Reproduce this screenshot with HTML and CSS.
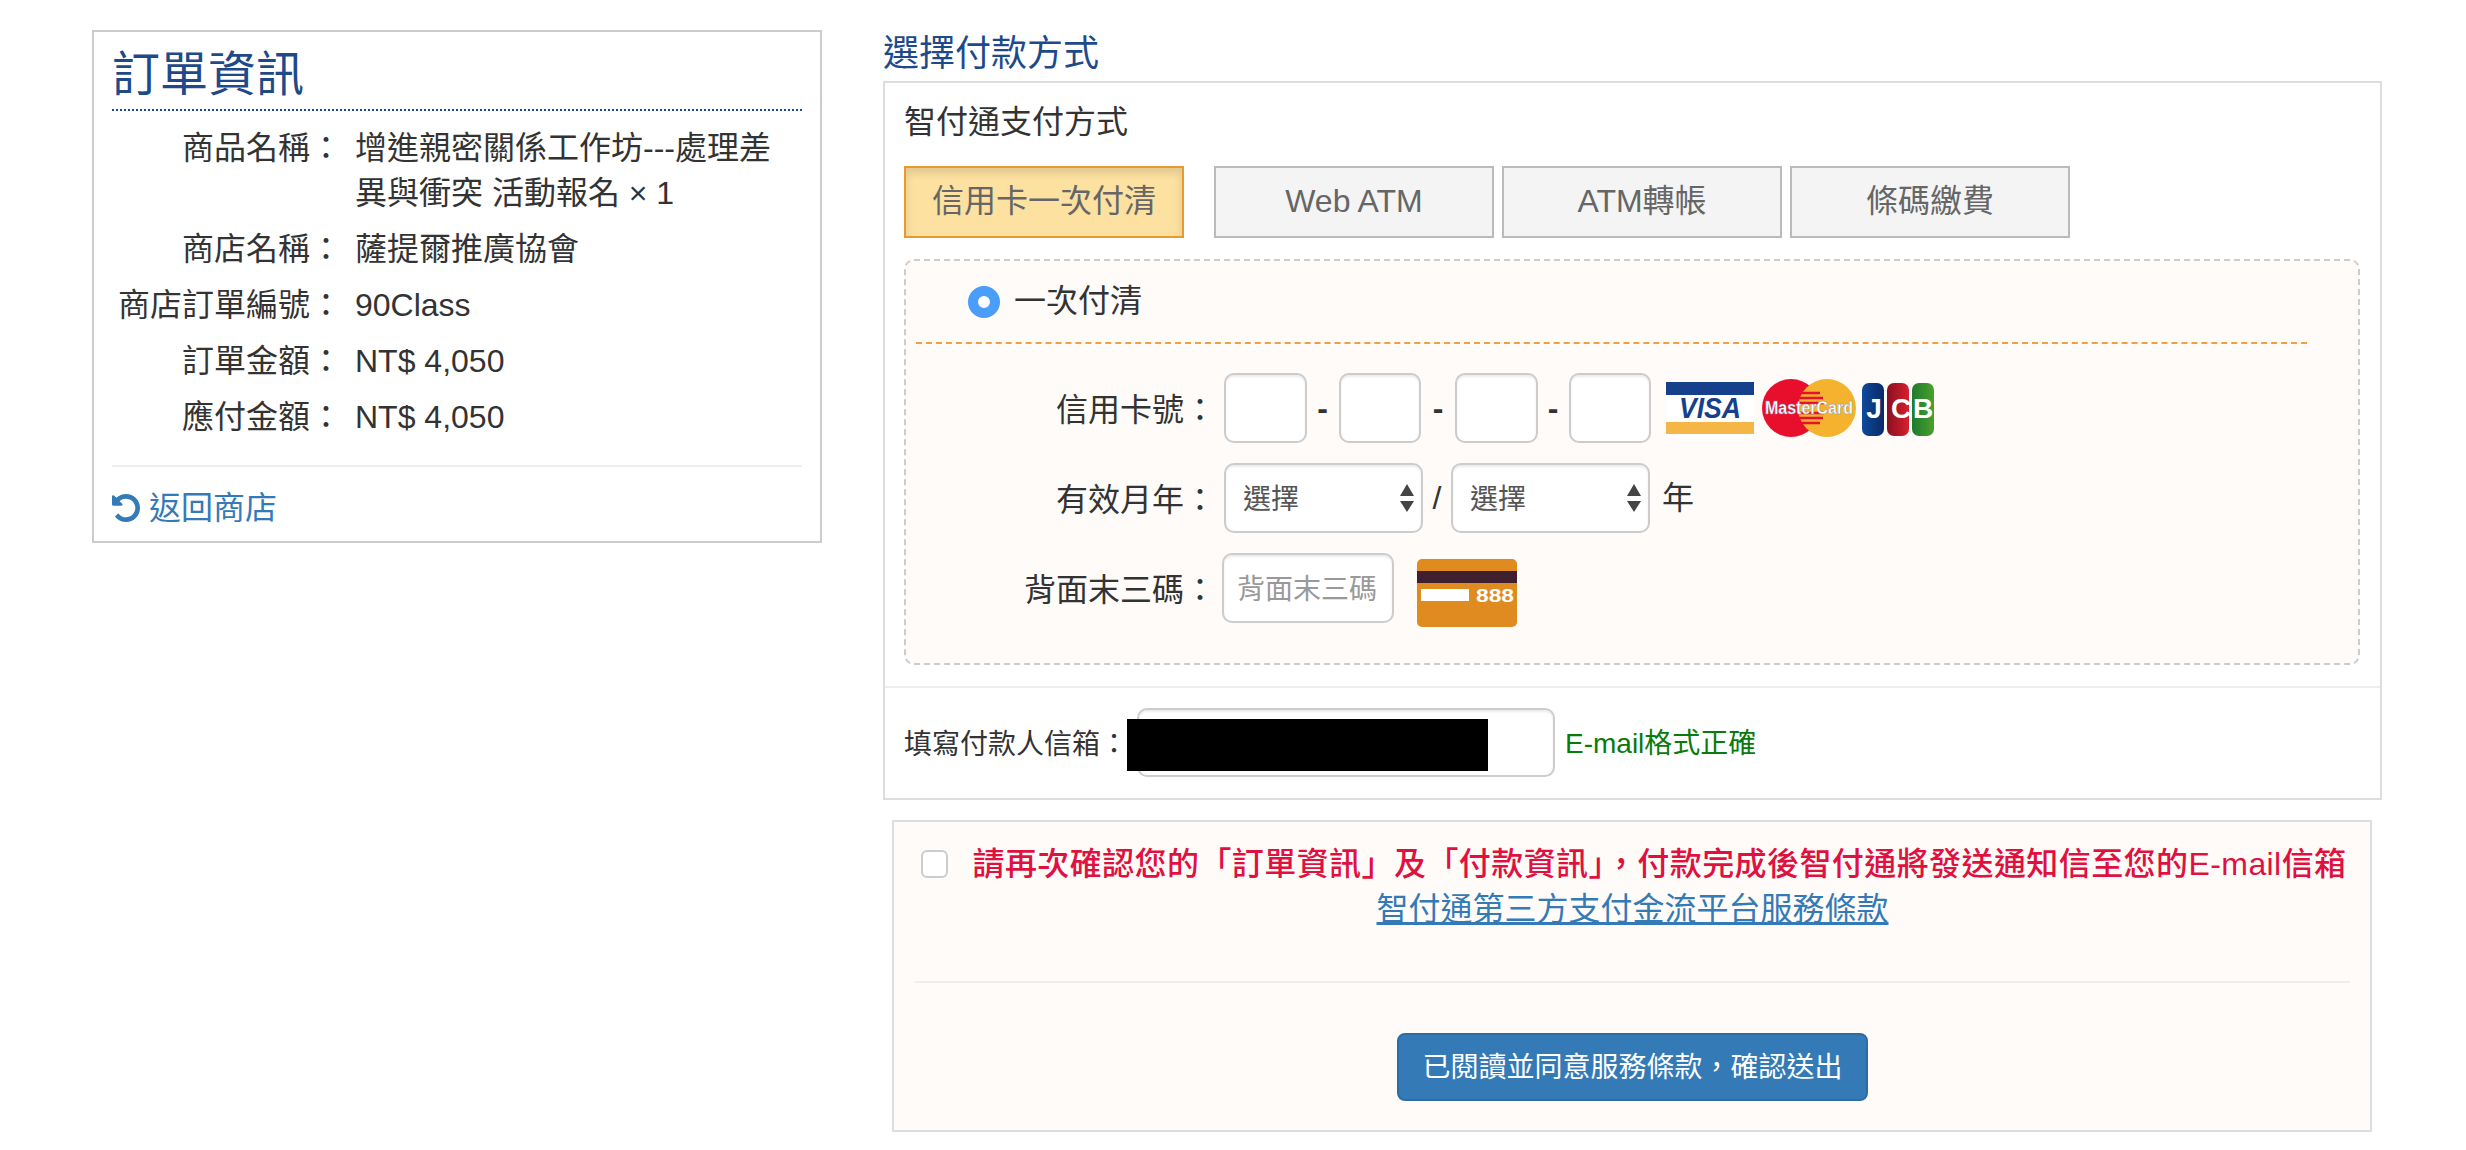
FILE: index.html
```html
<!DOCTYPE html>
<html lang="zh-TW">
<head>
<meta charset="utf-8">
<title>智付通支付</title>
<link rel="stylesheet" href="styles.css">
</head>
<body>
<main class="page">
  <aside class="order">
    <h2 class="order-title">訂單資訊</h2>
    <dl class="order-list">
      <dt>商品名稱：</dt><dd>增進親密關係工作坊---處理差異與衝突 活動報名 × 1</dd>
      <dt>商店名稱：</dt><dd>薩提爾推廣協會</dd>
      <dt>商店訂單編號：</dt><dd>90Class</dd>
      <dt>訂單金額：</dt><dd>NT$ 4,050</dd>
      <dt>應付金額：</dt><dd>NT$ 4,050</dd>
    </dl>
    <hr class="order-rule">
    <a class="back" href="#">
      <svg class="back-icon" viewBox="128 128 1536 1536" aria-hidden="true"><path fill="#337ab7" d="M1664 896q0 156-61 298t-164 245-245 164-298 61q-172 0-327-72.5t-264-204.5q-7-10-6.5-22.5t8.5-20.5l137-138q10-9 25-9 16 2 23 12 73 95 179 147t225 52q104 0 198.5-40.5t163.5-109.5 109.5-163.5 40.5-198.5-40.5-198.5-109.5-163.5-163.5-109.5-198.5-40.5q-98 0-188 35.5t-160 101.5l137 138q31 30 14 69-17 40-59 40h-448q-26 0-45-19t-19-45v-448q0-42 40-59 39-17 69 14l130 129q107-101 244.5-156.5t284.5-55.5q156 0 298 61t245 164 164 245 61 298z"/></svg>返回商店
    </a>
  </aside>

  <section class="checkout">
    <h2 class="checkout-title">選擇付款方式</h2>
    <div class="pay-box">
      <div class="pay-top">
        <h3 class="pay-title">智付通支付方式</h3>
        <div class="tabs">
          <button class="tab tab-active" type="button">信用卡一次付清</button>
          <button class="tab tab-web" type="button">Web ATM</button>
          <button class="tab tab-next" type="button">ATM轉帳</button>
          <button class="tab tab-next" type="button">條碼繳費</button>
        </div>
        <div class="card-panel">
          <label class="plan">
            <input class="radio" type="radio" name="plan" checked>
            <span>一次付清</span>
          </label>
          <div class="card-form">
            <div class="form-row">
              <span class="form-label">信用卡號：</span>
              <input class="field field-num" type="text" aria-label="1">
              <span class="dash">-</span>
              <input class="field field-num" type="text" aria-label="2">
              <span class="dash dash-wide">-</span>
              <input class="field field-num" type="text" aria-label="3">
              <span class="dash dash-last">-</span>
              <input class="field field-num" type="text" aria-label="4">
              <svg class="brands" width="268" height="58" viewBox="0 0 268 58" aria-hidden="true">
                <defs>
                  <linearGradient id="jb" x1="0" x2="1" y1="0" y2="0"><stop offset="0" stop-color="#0d4a9c"/><stop offset="1" stop-color="#0a2a66"/></linearGradient>
                  <linearGradient id="jr" x1="0" x2="1" y1="0" y2="0"><stop offset="0" stop-color="#8a1020"/><stop offset="1" stop-color="#d81f2e"/></linearGradient>
                  <linearGradient id="jg" x1="0" x2="1" y1="0" y2="0"><stop offset="0" stop-color="#1f7a2e"/><stop offset="1" stop-color="#4aa02c"/></linearGradient>
                </defs>
                <rect x="0" y="3" width="88" height="55" fill="#fff"/>
                <rect x="0" y="3" width="88" height="13" fill="#16408c"/>
                <rect x="0" y="43" width="88" height="12" fill="#f4b646"/>
                <text class="visa-text" x="44" y="39" text-anchor="middle" textLength="62" lengthAdjust="spacingAndGlyphs">VISA</text>
                <circle cx="125" cy="29" r="29" fill="#e80f2c"/>
                <circle cx="161" cy="29" r="29" fill="#f5b22f"/>
                <path d="M132 14h22M129 19h28M128 24h30M128 34h30M129 39h28M132 44h22" stroke="#e80f2c" stroke-width="2.5"/>
                <text class="mc-text" x="143" y="35" text-anchor="middle" textLength="88" lengthAdjust="spacingAndGlyphs">MasterCard</text>
                <rect x="196" y="4" width="22" height="53" rx="7" fill="url(#jb)"/>
                <rect x="221" y="4" width="22" height="53" rx="7" fill="url(#jr)"/>
                <rect x="246" y="4" width="22" height="53" rx="7" fill="url(#jg)"/>
                <text class="jcb-text" x="208" y="39" text-anchor="middle">J</text>
                <text class="jcb-text" x="235" y="39" text-anchor="middle">C</text>
                <text class="jcb-text" x="257" y="39" text-anchor="middle">B</text>
              </svg>
            </div>
            <div class="form-row">
              <span class="form-label">有效月年：</span>
              <div class="select-wrap">
                <select class="field field-select" aria-label="月"><option>選擇</option></select>
                <svg class="select-arrows" width="14" height="28" viewBox="0 0 14 28" aria-hidden="true"><path fill="#444" d="M7 0l7 12H0zM0 17h14L7 28z"/></svg>
              </div>
              <span class="slash">/</span>
              <div class="select-wrap">
                <select class="field field-select" aria-label="年"><option>選擇</option></select>
                <svg class="select-arrows" width="14" height="28" viewBox="0 0 14 28" aria-hidden="true"><path fill="#444" d="M7 0l7 12H0zM0 17h14L7 28z"/></svg>
              </div>
              <span class="year">年</span>
            </div>
            <div class="form-row form-row-cvc">
              <span class="form-label">背面末三碼：</span>
              <input class="field field-cvc" type="text" placeholder="背面末三碼">
              <svg class="cvc-card" width="100" height="68" viewBox="0 0 100 68" aria-hidden="true">
                <rect width="100" height="68" rx="5" fill="#e08b20"/>
                <rect y="12" width="100" height="12" fill="#401f2f"/>
                <rect x="4" y="30" width="48" height="12" fill="#fff"/>
                <text class="cvc-text" x="59" y="43" textLength="38" lengthAdjust="spacingAndGlyphs">888</text>
              </svg>
            </div>
          </div>
        </div>
      </div>
      <div class="pay-email">
        <span class="email-label">填寫付款人信箱：</span>
        <div class="email-wrap">
          <input class="field field-email" type="text" aria-label="E-mail">
          <div class="redaction"></div>
        </div>
        <span class="email-ok">E-mail格式正確</span>
      </div>
    </div>

    <div class="terms">
      <p class="terms-line"><input class="check" type="checkbox" aria-label="同意"><span class="terms-warn">請再次確認您的「訂單資訊」及「付款資訊」，付款完成後智付通將發送通知信至您的E-mail信箱</span></p>
      <p class="terms-link"><a href="#">智付通第三方支付金流平台服務條款</a></p>
      <hr class="terms-rule">
      <div class="submit-row"><button class="submit" type="button">已閱讀並同意服務條款，確認送出</button></div>
    </div>
  </section>
</main>
</body>
</html>
```

FILE: styles.css
```css
* { box-sizing: border-box; }
html, body { margin: 0; padding: 0; background: #fff; }
body {
  font-family: "Liberation Sans", "Noto Sans CJK TC", sans-serif;
  font-size: 32px;
  line-height: 45px;
  color: #333;
}
.page {
  display: flex;
  align-items: flex-start;
  gap: 61px;
  padding: 30px 0 0 92px;
}

/* order panel */
.order {
  flex: none;
  width: 730px;
  border: 2px solid #ccc;
  padding: 11px 18px 10px;
}
.order-title {
  margin: 0;
  height: 68px;
  padding-top: 2px;
  border-bottom: 2px dotted #1f4a8a;
  font-size: 48px;
  font-weight: 400;
  line-height: 60px;
  color: #1f4a8a;
}
.order-list {
  display: grid;
  grid-template-columns: 230px 420px;
  column-gap: 13px;
  row-gap: 11px;
  margin: 15px 0 0;
}
.order-list dt { text-align: right; font-weight: 400; }
.order-list dd { margin: 0; }
.order-rule {
  border: 0;
  border-top: 2px solid #eee;
  margin: 25px 0 18px;
}
.back {
  display: flex;
  align-items: center;
  gap: 9px;
  color: #337ab7;
  text-decoration: none;
  line-height: 46px;
}
.back-icon { width: 28px; height: 28px; flex: none; }

/* checkout */
.checkout { flex: none; width: 1499px; }
.checkout-title {
  margin: 0 0 5px;
  padding-top: 2px;
  font-size: 36px;
  font-weight: 400;
  line-height: 44px;
  color: #1f4a8a;
}
.pay-box { border: 2px solid #ddd; }
.pay-top { padding: 16px 20px 21px 19px; }
.pay-title {
  margin: 0 0 21px;
  font-size: 32px;
  font-weight: 400;
  line-height: 46px;
}
.tabs { display: flex; margin-bottom: 21px; }
.tab {
  width: 280px;
  height: 72px;
  padding: 0 0 2px;
  border: 2px solid #bbb;
  background: #f4f4f4;
  color: #666;
  font: inherit;
  font-size: 32px;
}
.tab-active {
  border-color: #e69a2f;
  background: #fde1a0;
  box-shadow: inset 0 5px 8px rgba(0, 0, 0, .12);
}
.tab-web { margin-left: 30px; }
.tab-next { margin-left: 8px; }

.card-panel {
  border: 2px dashed #ccc;
  border-radius: 10px;
  background: #fefbf8;
  padding-bottom: 40px;
}
.plan {
  display: flex;
  align-items: center;
  gap: 14px;
  height: 83px;
  margin: 0 51px 0 10px;
  padding-left: 52px;
  border-bottom: 2px dashed #f0a040;
}
.radio {
  appearance: none;
  width: 32px;
  height: 32px;
  margin: 0;
  border: 10px solid #4a9df8;
  border-radius: 50%;
  background: #fff;
}
.card-form {
  display: flex;
  flex-direction: column;
  gap: 20px;
  margin-top: 29px;
}
.form-row { display: flex; align-items: center; height: 70px; }
.form-label {
  flex: none;
  width: 310px;
  margin-right: 8px;
  padding-top: 5px;
  text-align: right;
}
.field {
  border: 2px solid #ccc;
  border-radius: 10px;
  background: #fff;
  box-shadow: inset 0 2px 2px rgba(0, 0, 0, .075);
  font: inherit;
  font-size: 28px;
  color: #555;
}
.field-num { width: 82.5px; height: 70px; padding: 0 8px; }
.dash { width: 32px; text-align: center; color: #333; font-weight: 700; line-height: 46px; }
.dash-wide { width: 34px; }
.dash-last { width: 31px; }
.brands { margin-left: 15px; flex: none; }
.visa-text {
  font: italic 700 30px "Liberation Sans", sans-serif;
  fill: #16408c;
}
.mc-text {
  font: 700 18px "Liberation Sans", sans-serif;
  fill: #fff;
  stroke: #7b8fb5;
  stroke-width: .4px;
}
.jcb-text { font: 700 28px "Liberation Sans", sans-serif; fill: #fff; }

.select-wrap { position: relative; }
.field-select {
  appearance: none;
  display: block;
  width: 199px;
  height: 70px;
  padding: 3px 0 0 17px;
}
.select-arrows {
  position: absolute;
  top: 21px;
  right: 9px;
  pointer-events: none;
}
.slash { width: 28px; text-align: center; }
.year { margin-left: 12px; }

.form-row-cvc .form-label { margin-right: 6px; }
.field-cvc { width: 172px; height: 70px; padding: 3px 13px 0; }
.field-cvc::placeholder { color: #999; opacity: 1; }
.cvc-card { flex: none; margin: 9px 0 0 23px; }
.cvc-text { font: 700 19px "Liberation Sans", sans-serif; fill: #fff; }

/* email */
.pay-email {
  display: flex;
  align-items: center;
  padding: 20px 19px 21px;
  border-top: 2px solid #eee;
  font-size: 28px;
}
.email-label {
  flex: none;
  width: 224px;
  margin-right: 9px;
  padding-top: 3px;
  white-space: nowrap;
}
.email-wrap { position: relative; }
.field-email { display: block; width: 418px; height: 69px; }
.redaction {
  position: absolute;
  top: 11px;
  left: -10px;
  width: 361px;
  height: 52px;
  background: #000;
}
.email-ok { margin-left: 10px; padding-top: 2px; color: #0a7a0a; }

/* terms */
.terms {
  width: 1480px;
  margin: 20px 0 0 9px;
  padding: 19px 20px 29px 21px;
  border: 2px solid #ddd;
  background: #fefbf8;
  text-align: center;
}
.terms-line {
  display: flex;
  justify-content: center;
  align-items: center;
  gap: 25px;
  margin: 0 0 0 2px;
  line-height: 46px;
  white-space: nowrap;
}
.check {
  appearance: none;
  flex: none;
  width: 27px;
  height: 28px;
  margin: 0;
  border: 2px solid #ccc;
  border-radius: 6px;
  background: #fff;
}
.terms-warn { color: #e0103f; font-weight: 500; letter-spacing: .42px; }
.terms-link { margin: 0; line-height: 44px; }
.terms-link a { color: #337ab7; }
.terms-rule {
  border: 0;
  border-top: 2px solid #eee;
  margin: 50px 0 50px;
}
.submit-row { display: flex; justify-content: center; }
.submit {
  width: 471px;
  height: 68px;
  padding: 0;
  border: 2px solid #2e6da4;
  border-radius: 8px;
  background: #337ab7;
  color: #fff;
  font: inherit;
  font-size: 28px;
}
```
